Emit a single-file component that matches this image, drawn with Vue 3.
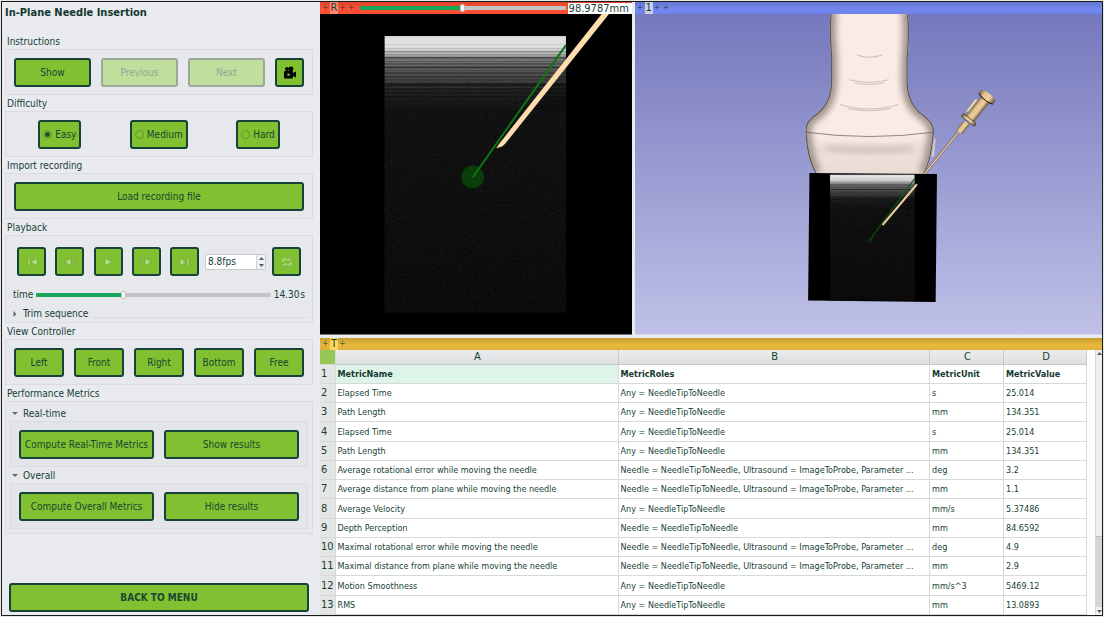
<script setup>
import { ref, computed } from 'vue'

const level = ref('Easy')
const levels = ['Easy', 'Medium', 'Hard']
const views = ['Left', 'Front', 'Right', 'Bottom', 'Free']
const time = ref(37)
const offset = ref(50)
const fps = ref('8.8fps')
const depth = ref('98.9787mm')
const timeFill = computed(() => ({ '--fill': time.value + '%' }))
const offsetFill = computed(() => ({ '--fill': offset.value + '%' }))

const transport = [
  { name: 'First frame', d: 'M2 2h2v8H2zM11 2v8L5 6z' },
  { name: 'Previous frame', d: 'M7 2v8L1 6zM8 2h1v8H8zM10 2h1v8h-1z' },
  { name: 'Play', d: 'M3 2v8l7-4z' },
  { name: 'Next frame', d: 'M1 2h1v8H1zM3 2h1v8H3zM5 2v8l6-4z' },
  { name: 'Last frame', d: 'M1 2v8l6-4zM8 2h2v8H8z' }
]

const any = 'Any = NeedleTipToNeedle'
const long = 'Needle = NeedleTipToNeedle, Ultrasound = ImageToProbe, Parameter ...'
const rows = [
  ['Elapsed Time', any, 's', '25.014'],
  ['Path Length', any, 'mm', '134.351'],
  ['Elapsed Time', any, 's', '25.014'],
  ['Path Length', any, 'mm', '134.351'],
  ['Average rotational error while moving the needle', long, 'deg', '3.2'],
  ['Average distance from plane while moving the needle', long, 'mm', '1.1'],
  ['Average Velocity', any, 'mm/s', '5.37486'],
  ['Depth Perception', 'Needle = NeedleTipToNeedle', 'mm', '84.6592'],
  ['Maximal rotational error while moving the needle', long, 'deg', '4.9'],
  ['Maximal distance from plane while moving the needle', long, 'mm', '2.9'],
  ['Motion Smoothness', any, 'mm/s^3', '5469.12'],
  ['RMS', any, 'mm', '13.0893']
]

// dark echo bands: distance from the skin line, thickness, strength
const bands = [
  [24, 3, 0.1], [36, 3, 0.1], [45, 4, 0.3], [54, 3, 0.2], [63, 4, 0.5], [75, 3, 0.2],
  [82, 3, 0.4], [92, 4, 0.6], [102, 3, 0.2], [109, 4, 0.4], [120, 4, 0.4], [130, 3, 0.3],
  [141, 10, 0.5], [156, 5, 0.4], [168, 4, 0.3], [180, 5, 0.3], [194, 4, 0.2]
]
</script>

<template>
  <div class="app">
    <aside class="panel">
      <h1>In-Plane Needle Insertion</h1>

      <section>
        <h2>Instructions</h2>
        <div class="box row">
          <button class="btn grow">Show</button>
          <button class="btn grow" disabled>Previous</button>
          <button class="btn grow" disabled>Next</button>
          <button class="btn square" aria-label="Video">
            <svg width="14" height="14" viewBox="0 0 14 14">
              <circle cx="4" cy="3" r="2" /><circle cx="8" cy="3" r="2.4" />
              <path d="M1 6q0-1 1-1h7q1 0 1 1v1l3-1.5v6L10 10v1.500q0 1-1 1H2q-1 0-1-1z" />
              <path d="M4.500 7v3.500L7.500 8.800z" fill="#80c030" />
            </svg>
          </button>
        </div>
      </section>

      <section>
        <h2>Difficulty</h2>
        <div class="box row around">
          <label v-for="l in levels" :key="l" class="btn option">
            <input v-model="level" type="radio" name="level" :value="l" />{{ l }}
          </label>
        </div>
      </section>

      <section>
        <h2>Import recording</h2>
        <div class="box row"><button class="btn grow">Load recording file</button></div>
      </section>

      <section>
        <h2>Playback</h2>
        <div class="box playback">
          <div class="controls">
            <div class="transport">
              <button v-for="t in transport" :key="t.name" class="btn square" :aria-label="t.name">
                <svg width="12" height="12" viewBox="0 0 12 12"><path class="glyph" :d="t.d" /></svg>
              </button>
            </div>
            <div class="spin">
              <input v-model="fps" type="text" aria-label="Frame rate" />
              <span class="steps">
                <button aria-label="Faster"><svg width="5" height="3" viewBox="0 0 5 3"><path d="M0 3h5L2.500 0z" /></svg></button>
                <button aria-label="Slower"><svg width="5" height="3" viewBox="0 0 5 3"><path d="M0 0h5L2.500 3z" /></svg></button>
              </span>
            </div>
            <button class="btn square" aria-label="Loop">
              <svg width="12" height="12" viewBox="0 0 12 12">
                <path class="loop" d="M2 6V3.500H8M10 6v2.500H4" /><path class="glyph" d="M7 1v5l4-2.500zM5 6v5L1 8.500z" />
              </svg>
            </button>
          </div>
          <div class="time">
            <label for="time">time</label>
            <input id="time" v-model="time" class="slider" type="range" min="0" max="100" :style="timeFill" />
            <output for="time">14.30&#8202;s</output>
          </div>
          <button class="fold trim">
            <svg width="5" height="6" viewBox="0 0 5 6"><path d="M1 0v6l3-3z" /></svg>
            <span>Trim sequence</span>
          </button>
        </div>
      </section>

      <section>
        <h2>View Controller</h2>
        <div class="box row">
          <button v-for="v in views" :key="v" class="btn grow">{{ v }}</button>
        </div>
      </section>

      <section>
        <h2>Performance Metrics</h2>
        <div class="box metrics">
          <button class="fold"><svg width="6" height="5" viewBox="0 0 6 5"><path d="M0 1h6L3 4z" /></svg><span>Real-time</span></button>
          <div class="box row">
            <button class="btn grow">Compute Real-Time Metrics</button>
            <button class="btn grow">Show results</button>
          </div>
          <button class="fold"><svg width="6" height="5" viewBox="0 0 6 5"><path d="M0 1h6L3 4z" /></svg><span>Overall</span></button>
          <div class="box row">
            <button class="btn grow">Compute Overall Metrics</button>
            <button class="btn grow">Hide results</button>
          </div>
        </div>
      </section>

      <button class="btn back">BACK TO MENU</button>
    </aside>

    <main>
      <div class="views">
        <section class="view">
          <header class="bar red">
            <i>+</i><b>R</b><i>+</i><i>+</i>
            <input v-model="offset" class="slider" type="range" min="0" max="100" aria-label="Slice offset" :style="offsetFill" />
            <input v-model="depth" class="depth" type="text" aria-label="Slice offset value" />
          </header>
          <svg class="scene" viewBox="6 42 936 960" preserveAspectRatio="xMidYMid slice">
            <defs>
              <linearGradient id="echo" x1="0" y1="0" x2="0" y2="1">
                <stop offset="0" stop-color="#d8d8d8" /><stop offset=".012" stop-color="#e2e2e2" />
                <stop offset=".04" stop-color="#dedede" /><stop offset=".066" stop-color="#b4b4b4" />
                <stop offset=".08" stop-color="#747474" /><stop offset=".12" stop-color="#585858" />
                <stop offset=".165" stop-color="#3c3c3c" /><stop offset=".2" stop-color="#1e1e1e" />
                <stop offset=".27" stop-color="#0e0e0e" /><stop offset="1" stop-color="#080808" />
              </linearGradient>
              <filter id="grain" x="0" y="0" width="1" height="1">
                <feTurbulence type="fractalNoise" baseFrequency=".3" numOctaves="2" seed="4" />
                <feColorMatrix values="0 0 0 0 .7  0 0 0 0 .7  0 0 0 0 .7  .7 .5 0 0 -.52" />
              </filter>
            </defs>
            <rect x="6" y="42" width="936" height="960" />
            <g>
              <rect x="201" y="108" width="543" height="828" fill="url(#echo)" />
              <rect v-for="b in bands" :key="b[0]" x="201" :y="108 + b[0]" width="543" :height="b[1]" :opacity="b[2]" />
              <path d="M744 170V330H640z" opacity=".3" />
              <rect x="201" y="108" width="543" height="828" filter="url(#grain)" opacity=".2" />
            </g>
            <circle cx="465" cy="530" r="34" fill="#093e0b" />
            <path d="M744 135L465 531" stroke="#0c7414" stroke-width="6" />
            <path d="M535 444L543 432L851 42H873L562 431L553 439z" fill="#fddcae" />
          </svg>
        </section>

        <section class="view">
          <header class="bar blue"><i>+</i><b>1</b><i>+</i><i>+</i></header>
          <svg class="scene" viewBox="3 42 1401 960" preserveAspectRatio="xMidYMid slice">
            <defs>
              <linearGradient id="sky" x1="0" y1="0" x2="0" y2="1">
                <stop offset="0" stop-color="#7578bc" /><stop offset="1" stop-color="#bfc1e8" />
              </linearGradient>
              <linearGradient id="head" x1="0" x2="0" y1="0" y2="1">
                <stop offset="0" stop-color="#fbebe5" /><stop offset=".2" stop-color="#f6e6e0" />
                <stop offset=".4" stop-color="#e9dad4" /><stop offset=".6" stop-color="#efdfd9" /><stop offset="1" stop-color="#e8dad4" />
              </linearGradient>
              <linearGradient id="tube" x1="0" x2="1" y1="0" y2="0">
                <stop offset="0" stop-color="#7d6848" /><stop offset=".3" stop-color="#e5c594" />
                <stop offset=".65" stop-color="#edcd9c" /><stop offset="1" stop-color="#66543a" />
              </linearGradient>
              <filter id="soft" x="-20%" y="-50%" width="140%" height="200%"><feGaussianBlur stdDeviation="9" /></filter>
              <clipPath id="probe">
                <path d="M590 42C585 70 588 130 591 170V240C590 285 580 310 555 335C535 352 514 360 514 392C516 440 524 485 545 521H870C887 490 895 440 899 394C898 365 880 355 855 334C830 312 820 275 820 240V180C824 130 827 75 820 42z" />
              </clipPath>
            </defs>
            <rect x="3" y="42" width="1401" height="960" fill="url(#sky)" />
            <g clip-path="url(#probe)">
              <rect x="510" y="42" width="395" height="480" fill="#fbebe5" />
              <path d="M510 396Q706 420 905 396V525H510z" fill="url(#head)" />
              <path d="M570 436Q706 450 840 436L820 450Q706 462 590 450z" fill="#b8a9a3" filter="url(#soft)" opacity=".7" />
              <g fill="none" stroke-linejoin="round">
                <path d="M590 30C585 70 588 130 591 170V240C590 285 580 310 555 335C535 352 514 360 514 392C516 440 524 485 545 521M870 521C887 490 895 440 899 394C898 365 880 355 855 334C830 312 820 275 820 240V180C824 130 827 75 820 30" stroke="#a39792" stroke-width="38" filter="url(#soft)" />
                <path d="M590 42C585 70 588 130 591 170V240C590 285 580 310 555 335C535 352 514 360 514 392C516 440 524 485 545 521M870 521C887 490 895 440 899 394C898 365 880 355 855 334C830 312 820 275 820 240V180C824 130 827 75 820 42" stroke="#5a534e" stroke-width="6" />
              </g>
              <path d="M514 396Q706 422 899 396" fill="none" stroke="#5a534f" stroke-width="2" />
              <g fill="none" stroke="#cfc2bc" stroke-width="3">
                <path d="M668 165Q706 178 744 165" /><path d="M645 239Q706 256 763 239M660 248Q706 258 750 248" />
                <path d="M618 313Q706 340 792 313M640 325Q706 338 770 325" />
              </g>
            </g>
            <path d="M899 414L904 418L900 465L891 473z" fill="#ddd0c9" stroke="#a79c96" stroke-width="1" />
            <path d="M526 518L908 521L904 905L522 900z" />
            <g transform="translate(494 473) scale(.466)">
              <rect x="201" y="108" width="543" height="808" fill="url(#echo)" />
              <rect v-for="b in bands" :key="b[0]" x="201" :y="108 + b[0]" width="543" :height="b[1] + 2" :opacity="b[2]" />
              <path d="M744 170V330H640z" opacity=".3" />
              <rect x="201" y="108" width="543" height="808" filter="url(#grain)" opacity=".14" />
            </g>
            <path d="M841 535L706 720" stroke="#085a0c" stroke-width="3" />
            <circle cx="706" cy="720" r="8" fill="#063808" opacity=".5" />
            <path d="M848 552L745 674" stroke="#eccb9d" stroke-width="6" />
            <path d="M973 395L871 520" stroke="#6d5b42" stroke-width="7" />
            <path d="M973 395L871 520" stroke="#f0cfa0" stroke-width="4" />
            <path d="M1024 296L1030 300L1003 335L994 335z" fill="#ead9bd" stroke="#a4947a" stroke-width="1" />
            <g transform="translate(975 395) rotate(38.500)">
              <path d="M-11 0V-36H11V0Q0 5-11 0z" fill="url(#tube)" />
              <path d="M-16-46V-132H16V-46z" fill="url(#tube)" />
              <rect x="-25" y="-51" width="50" height="11" rx="5" fill="url(#tube)" stroke="#2d2417" stroke-width="2" />
              <path d="M-27-141V-127Q0-117 27-127V-141Q0-151-27-141z" fill="url(#tube)" />
              <path d="M-27-127Q0-117 27-127" fill="none" stroke="#20180e" stroke-width="3" />
            </g>
          </svg>
        </section>
      </div>

      <section class="sheet">
        <header class="bar gold"><i>+</i><b>T</b><i>+</i></header>
        <div class="sheet-body">
          <table>
            <colgroup><col class="c-n" /><col class="c-a" /><col /><col class="c-c" /><col class="c-d" /></colgroup>
            <thead>
              <tr><td class="corner"></td><th scope="col">A</th><th scope="col">B</th><th scope="col">C</th><th scope="col">D</th></tr>
            </thead>
            <tbody>
              <tr class="names"><th scope="row">1</th><td class="picked">MetricName</td><td>MetricRoles</td><td>MetricUnit</td><td>MetricValue</td></tr>
              <tr v-for="(r, i) in rows" :key="i">
                <th scope="row">{{ i + 2 }}</th>
                <td v-for="(c, j) in r" :key="j">{{ c }}</td>
              </tr>
            </tbody>
          </table>
          <div class="scroll">
            <button aria-label="Scroll up"><svg width="5" height="3" viewBox="0 0 5 3"><path d="M0 3h5L2.500 0z" /></svg></button>
            <span class="lane"></span><span class="thumb"></span>
            <button aria-label="Scroll down"><svg width="5" height="3" viewBox="0 0 5 3"><path d="M0 0h5L2.500 3z" /></svg></button>
          </div>
        </div>
      </section>
    </main>
  </div>
</template>

<style>
body { background: #e6e8e6; }
</style>

<style scoped>
* { box-sizing: border-box; }
.app {
  display: grid;
  grid-template-columns: 317px minmax(0, 1fr);
  column-gap: 1px;
  min-height: 615px;
  margin: 1px;
  border: 1px solid #1a1c1c;
  background: #e9ebef;
  color: #173f36;
  font: 10px/16px "DejaVu Sans Condensed", "Noto Sans", sans-serif;
}
button, input { font: inherit; color: inherit; margin: 0; padding: 0; }
svg { display: block; }

.panel { display: flex; flex-direction: column; padding: 3px 6px 3px 3px; }
h1 { margin: 0 0 12px; font-size: 11px; line-height: 16px; color: #12382f; }
h2 { margin: 0; padding: 2px 0 0 2px; font-size: 10px; font-weight: 400; line-height: 14px; }
.box { border: 1px solid #dadcdf; background: #e6e8eb; }
.row { display: flex; gap: 10px; padding: 8px 8px 7px; }
.around { justify-content: space-around; gap: 0; }
.grow { flex: 1 1 0; }
.btn {
  height: 29px;
  border: 2px solid #154339;
  border-radius: 3px;
  background: #80c031;
  color: #1a4632;
  white-space: nowrap;
}
.btn:disabled { border-color: #9da79a; background: #c0df9c; color: #94a596; }
.square { display: grid; place-items: center; width: 29px; flex: none; }
.option { display: flex; align-items: center; gap: 3px; padding: 0 3px; }
.option input {
  appearance: none;
  width: 9px;
  height: 9px;
  border: 1px solid #5f9a2c;
  border-radius: 50%;
}
.option input:checked { background: radial-gradient(circle, #24502a 0 2px, transparent 3px); }
.glyph { fill: #b4da87; stroke: #66a130; stroke-width: .5; }
.loop { fill: none; stroke: #a6d275; stroke-width: 2; }

.playback { padding: 11px 4px 0 6px; height: 88px; }
.controls { display: flex; align-items: center; gap: 6px; padding: 0 7px 0 5px; }
.transport { flex: 1; display: flex; justify-content: space-between; }
.spin { display: flex; width: 61px; height: 16px; border: 1px solid #c6cacb; border-radius: 2px; background: #fff; }
.spin input { flex: 1; min-width: 0; padding-left: 2px; border: 0; background: none; }
.steps { display: flex; flex-direction: column; width: 9px; border-left: 1px solid #cfd2d3; background: #f0f1f2; }
.steps button, .scroll button { flex: 1; display: grid; place-items: center; border: 0; background: none; fill: #53625d; }
.time { display: flex; align-items: center; gap: 3px; height: 16px; margin-top: 11px; padding: 0 3px 0 1px; }
.slider {
  appearance: none;
  flex: 1;
  min-width: 0;
  height: 8px;
  background: linear-gradient(to right, #1aa55c var(--fill), #c3c5c5 0) center / 100% 4px no-repeat;
}
.slider::-webkit-slider-thumb {
  appearance: none;
  width: 5px;
  height: 8px;
  border: 1px solid #b9bdbd;
  border-radius: 2px;
  background: #fff;
}
.fold { display: flex; align-items: center; gap: 5px; height: 16px; width: 100%; padding-top: 1px; border: 0; background: none; fill: #5e706b; text-align: left; }
.fold svg { width: 6px; flex: none; }
.trim { margin-top: 2px; }
.trim::after { content: ""; flex: 1; align-self: end; height: 3px; border-top: 1px dotted #cdd0d3; }
.metrics { padding: 3px 4px 4px; }
.metrics .fold { padding-left: 2px; }
.metrics .box { background: #e3e5e8; }
.back { margin: auto 4px 0; font-weight: 700; }

main { display: flex; flex-direction: column; min-width: 0; }
.views { flex: 1 1 332px; display: grid; grid-template-columns: minmax(0, 2fr) minmax(0, 3fr); gap: 3px; }
.view { display: flex; flex-direction: column; }
.scene { flex: 1 1 0; min-height: 0; width: 100%; }
.bar { display: flex; align-items: center; height: 12px; padding-left: 1px; flex: none; }
.bar i { width: 9px; text-align: center; font-size: 8px; font-style: normal; line-height: 10px; opacity: .8; }
.bar b { width: 8px; text-align: center; font-weight: 400; font-size: 11px; line-height: 12px; }
.red { background: linear-gradient(#e0452c, #ff5136 60%, #f64a30); }
.red b { background: #ff8c77; }
.red .slider { margin-left: 4px; }
.depth { width: 64px; height: 11px; margin-left: 2px; padding-left: 1px; border: 0; background: #fff; font-size: 11px; line-height: 11px; }
.blue { background: linear-gradient(#6477d0, #7387f0 60%, #6f82ec); }
.blue b { background: #c9cde6; }
.gold { background: linear-gradient(#c79d2f, #e9b93d 60%, #ddb03a); }
.gold b { background: #ffd75c; }

.sheet { margin-top: 3px; background: #fff; }
.sheet-body { display: flex; gap: 8px; }
table { flex: 1; min-width: 0; border-collapse: collapse; table-layout: fixed; }
.c-n { width: 15px; }
.c-a { width: 283px; }
.c-c { width: 74px; }
.c-d { width: 83px; }
th, td { padding: 0 0 0 2px; border-right: 1px solid #d6d9da; border-bottom: 1px solid #d6d9da; text-align: left; white-space: nowrap; overflow: hidden; }
thead th { height: 15px; font-size: 11px; line-height: 14px; text-align: center; font-weight: 400; background: linear-gradient(#eceded, #dcdedf); border-color: #c6c9ca; }
.corner { background: #94c755; }
tbody tr { height: 19px; }
tbody tr:nth-child(4n) { height: 20px; }
tbody th { padding-left: 1px; font-size: 11px; font-weight: 400; background: #e3e5e6; line-height: 18px; }
tbody td { font-size: 9px; line-height: 18px; }
.names td { font-weight: 700; color: #12382f; }
.names .picked { background: #dff4e8; }
.scroll { display: flex; flex-direction: column; width: 7px; background: #edeff0; border-left: 1px solid #d4d7d8; }
.scroll button { flex: 0 0 8px; }
.lane { flex: 180; }
.thumb { flex: 71; background: #d3d6d7; border-top: 1px solid #b9bdbe; }
</style>
